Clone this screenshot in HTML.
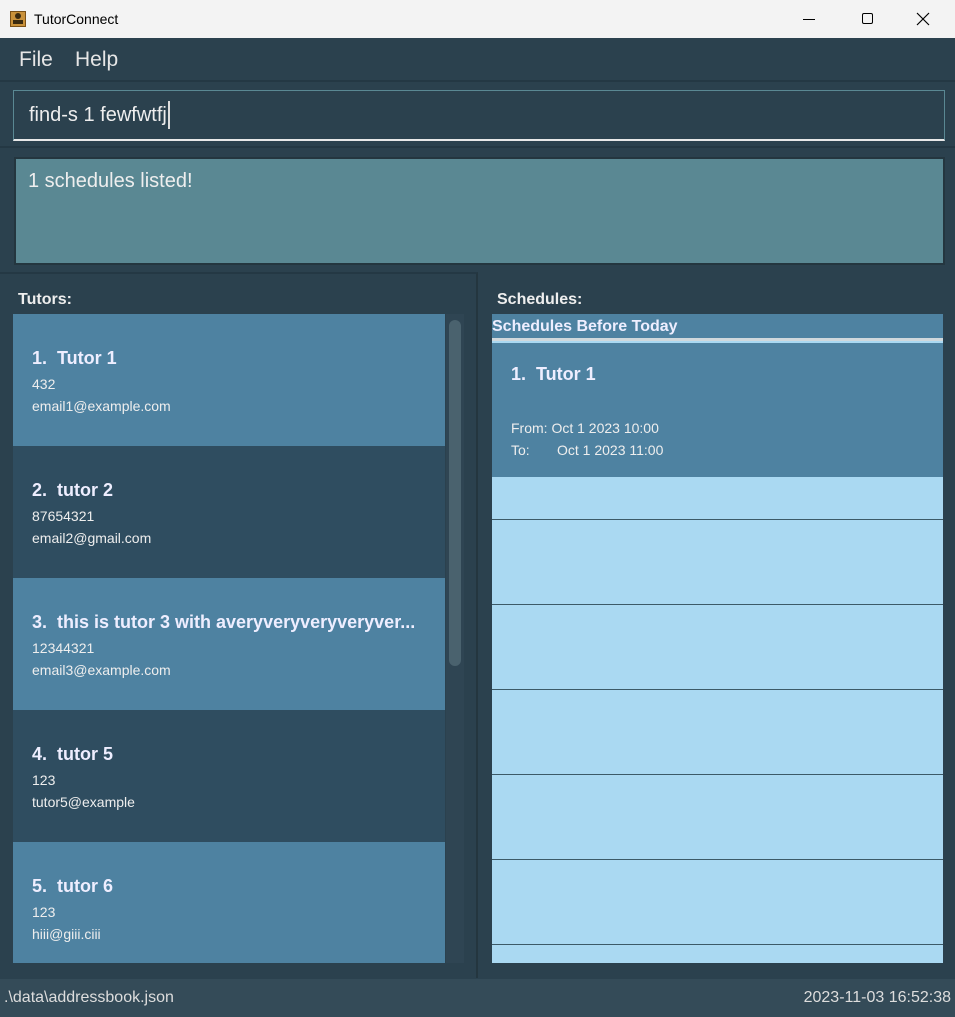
<!DOCTYPE html>
<html><head><meta charset="utf-8"><style>
*{margin:0;padding:0;box-sizing:border-box}
body{width:955px;height:1017px;background:#2b414e;font-family:"Liberation Sans",sans-serif;position:relative;overflow:hidden;color:#fff}
.abs{position:absolute}
.title{left:0;top:0;width:955px;height:38px;background:#f3f3f3;color:#000;font-size:14px}
.menu{top:38px;left:0;width:955px;height:44px;background:#2b414e;border-bottom:2px solid #243844}
.menu span{position:absolute;top:10px;font-size:21px;color:#e6e6e6}
.cmd{top:84px;left:0;width:955px;height:64px;background:#2b414e;border-bottom:2px solid #243844}
.input{left:13px;top:90px;width:932px;height:51px;border:1px solid #5a8893;border-bottom:2px solid #e8e8e8;background:#2b414e}
.res{left:14px;top:157px;width:931px;height:108px;background:#5a8893;border:2px solid #24363f}
.lp{left:0;top:272px;width:478px;height:706px;border-top:2px solid #243844;border-right:2px solid #24363f}
.card{position:absolute;left:13px;width:432px;height:132px}
.card .t{position:absolute;left:19px;top:34px;font-size:18px;font-weight:bold;color:#eef}
.card .a{position:absolute;left:19px;top:62px;font-size:14px;color:#eee}
.card .b{position:absolute;left:19px;top:84px;font-size:14px;color:#eee}
.l{background:#4e82a1}.d{background:#2f4d60}
.row{position:absolute;left:492px;width:451px;border-bottom:1px solid #3c5a68}
.status{left:0;top:979px;width:955px;height:38px;background:#344b58;font-size:16px;color:#ddd}
</style></head><body>
<div class="abs title">
 <div class="abs" style="left:10px;top:11px;width:16px;height:16px;background:#c9913a;border:1px solid #7a5118"></div>
 <div class="abs" style="left:15px;top:13px;width:6px;height:6px;background:#3a2a10;border-radius:50%"></div>
 <div class="abs" style="left:13px;top:20px;width:10px;height:4px;background:#3a2a10"></div>
 <div class="abs" style="left:34px;top:11px">TutorConnect</div>
 <div class="abs" style="left:803px;top:19px;width:12px;height:1px;background:#000"></div>
 <div class="abs" style="left:862px;top:13px;width:11px;height:11px;border:1px solid #000;border-radius:2px"></div>
 <svg class="abs" style="left:916px;top:12px" width="14" height="14"><path d="M1 1L13 13M13 1L1 13" stroke="#000" stroke-width="1.2"/></svg>
</div>
<div class="abs menu"><span style="left:19px">File</span><span style="left:75px">Help</span></div>
<div class="abs cmd"></div>
<div class="abs input"><span class="abs" style="left:15px;top:13px;font-size:20px;color:#eee">find-s 1 fewfwtfj</span><span class="abs" style="left:154px;top:10px;width:2px;height:28px;background:#ddd"></span></div>
<div class="abs" style="left:0;top:150px;width:955px;height:122px;background:#2b414e"></div>
<div class="abs res"><span class="abs" style="left:12px;top:11px;font-size:20px;color:#eee">1 schedules listed!</span></div>
<div class="abs lp"></div>
<div class="abs" style="left:18px;top:291px;font-size:16px;font-weight:bold;color:#eee">Tutors:</div>
<div class="card l" style="top:314px"><span class="t">1.&nbsp; Tutor 1</span><span class="a">432</span><span class="b">email1@example.com</span></div>
<div class="card d" style="top:446px"><span class="t">2.&nbsp; tutor 2</span><span class="a">87654321</span><span class="b">email2@gmail.com</span></div>
<div class="card l" style="top:578px"><span class="t" style="white-space:nowrap">3.&nbsp; this is tutor 3 with averyveryveryveryver...</span><span class="a">12344321</span><span class="b">email3@example.com</span></div>
<div class="card d" style="top:710px"><span class="t">4.&nbsp; tutor 5</span><span class="a">123</span><span class="b">tutor5@example</span></div>
<div class="card l" style="top:842px;height:121px"><span class="t">5.&nbsp; tutor 6</span><span class="a">123</span><span class="b">hiii@giii.ciii</span></div>
<div class="abs" style="left:446px;top:314px;width:18px;height:649px;background:#2f4553"></div>
<div class="abs" style="left:449px;top:320px;width:12px;height:346px;background:#4a626e;border-radius:6px"></div>
<div class="abs" style="left:497px;top:291px;font-size:16px;font-weight:bold;color:#eee">Schedules:</div>
<div class="abs" style="left:492px;top:314px;width:451px;height:649px;background:#aad9f2"></div>
<div class="abs" style="left:492px;top:314px;width:451px;height:27px;background:#4e82a1;border-bottom:3px solid #d0d8dc"><span class="abs" style="left:0;top:4px;font-size:16px;font-weight:bold;color:#eef">Schedules Before Today</span></div>
<div class="abs" style="left:492px;top:343px;width:451px;height:134px;background:#4e82a1">
 <span class="abs" style="left:19px;top:21px;font-size:18px;font-weight:bold;color:#eef">1.&nbsp; Tutor 1</span>
 <span class="abs" style="left:19px;top:77px;font-size:14px;color:#eee">From: Oct 1 2023 10:00</span>
 <span class="abs" style="left:19px;top:99px;font-size:14px;color:#eee">To:</span>
 <span class="abs" style="left:65px;top:99px;font-size:14px;color:#eee">Oct 1 2023 11:00</span>
</div>
<div class="row" style="top:477px;height:43px"></div>
<div class="row" style="top:520px;height:85px"></div>
<div class="row" style="top:605px;height:85px"></div>
<div class="row" style="top:690px;height:85px"></div>
<div class="row" style="top:775px;height:85px"></div>
<div class="row" style="top:860px;height:85px"></div>
<div class="abs status"><span class="abs" style="left:4px;top:10px">.\data\addressbook.json</span><span class="abs" style="right:4px;top:10px">2023-11-03 16:52:38</span></div>
</body></html>
